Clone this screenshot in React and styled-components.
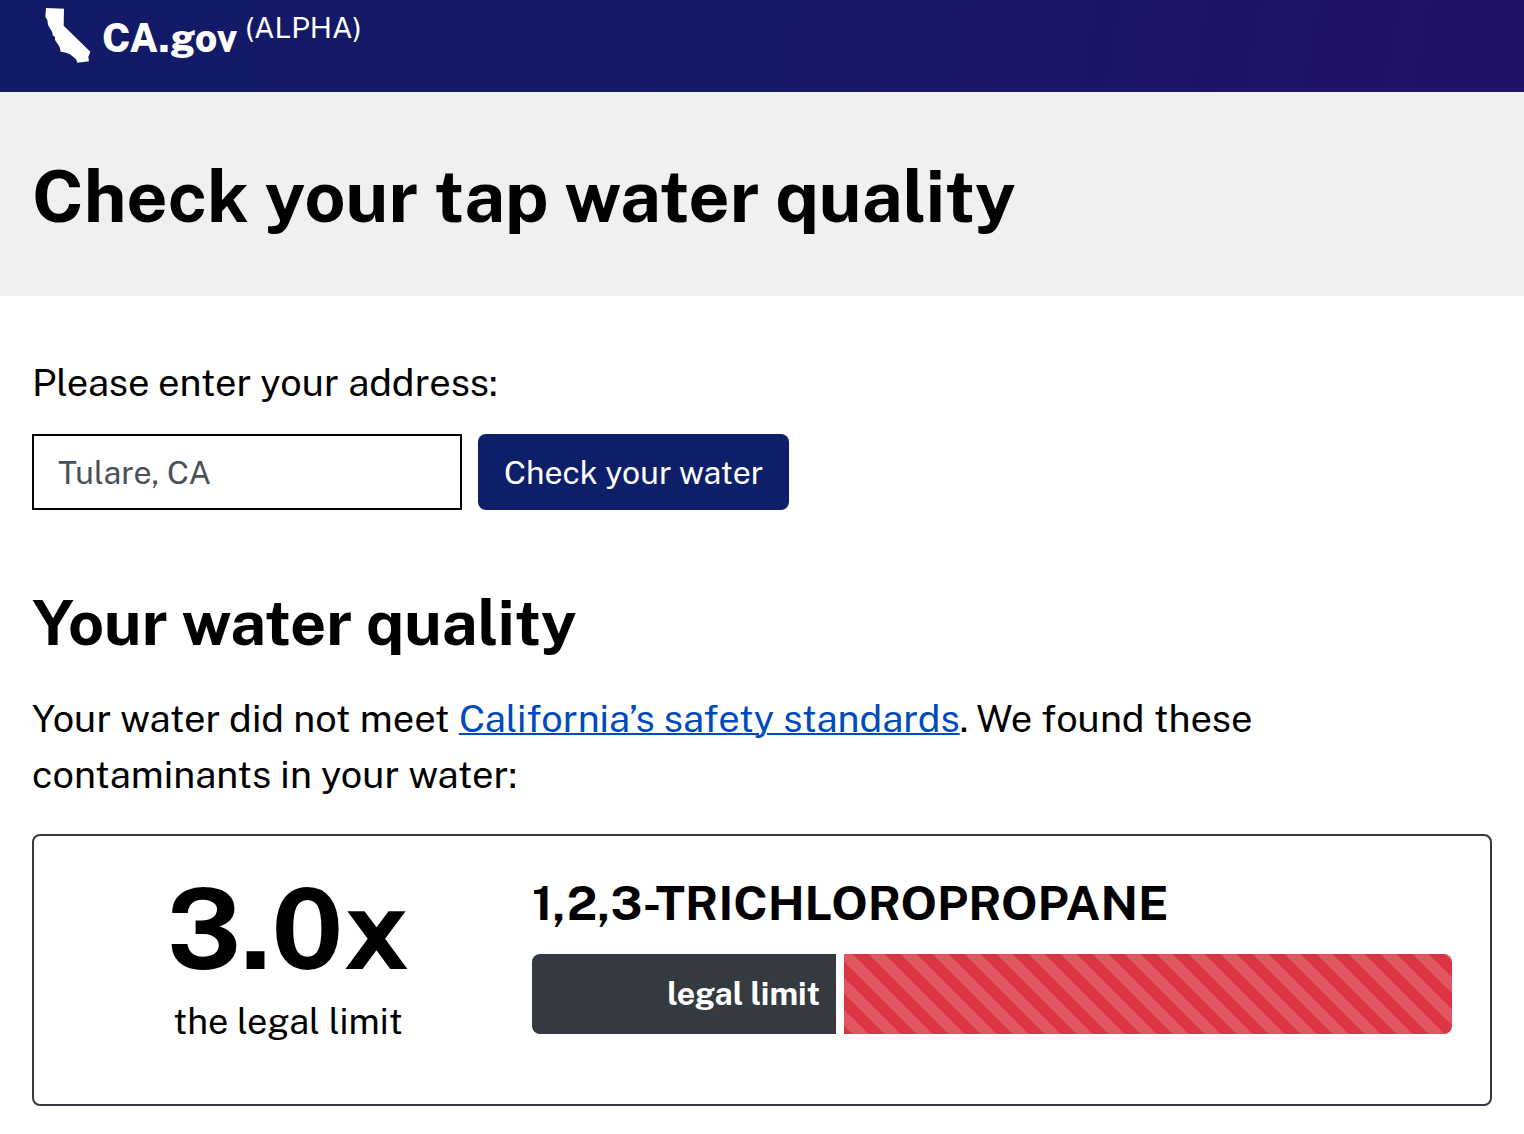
import React from "react";
import styled, { createGlobalStyle } from "styled-components";

const GlobalStyle = createGlobalStyle`
  * {
    box-sizing: border-box;
  }
  body {
    margin: 0;
    background-color: #fff;
    color: #000;
    font-family: "Public Sans", "Liberation Sans", Arial, sans-serif;
    font-size: 38px;
    line-height: 56px;
  }
`;

const Header = styled.header`
  display: flex;
  align-items: flex-start;
  min-height: 92px;
  padding: 0 45px;
  color: #fff;
  background: linear-gradient(100deg, #121b67 0%, #151767 50%, #201068 100%);
`;
const StateIcon = styled.svg`
  width: 46px;
  height: 56px;
  margin: 7px 11px 0 0;
  fill: #fff;
`;
const SiteName = styled.span`
  padding-top: 10px;
  font-size: 39px;
  font-weight: 800;
`;
const Stage = styled.span`
  margin-left: 8px;
  font-size: 29px;
`;
const Banner = styled.div`
  padding: 60px 32px 56px;
  background-color: #f0f0f0;
`;
const PageTitle = styled.h1`
  margin: 0;
  font-size: 72px;
  line-height: 88px;
`;
const Main = styled.main`
  padding: 59px 32px 28px;
`;
const AddressLabel = styled.label`
  display: block;
  margin-bottom: 23px;
`;
const AddressRow = styled.div`
  display: flex;
  flex-wrap: wrap;
  gap: 16px;
`;
const AddressInput = styled.input`
  width: 430px;
  height: 76px;
  padding: 0 24px;
  border: 2px solid #000;
  border-radius: 0;
  font-family: inherit;
  font-size: 32px;
  &::placeholder {
    color: #495057;
    opacity: 1;
  }
`;
const SubmitButton = styled.button`
  height: 76px;
  padding: 0 26px;
  border: 0;
  border-radius: 8px;
  color: #fff;
  background-color: #0e1f69;
  font-family: inherit;
  font-size: 32px;
  cursor: pointer;
`;
const SectionTitle = styled.h2`
  margin: 74px 0 31px;
  font-size: 63px;
  line-height: 76px;
`;
const Summary = styled.p`
  max-width: 1300px;
  margin: 0 0 31px;
`;
const TextLink = styled.a`
  color: #004abc;
  text-decoration: underline;
  text-decoration-thickness: 2px;
`;
const Card = styled.article`
  display: grid;
  grid-template-columns: 1fr 2fr;
  padding: 33px 38px 55px;
  border: 2px solid #343a40;
  border-radius: 8px;
`;
const Amount = styled.div`
  padding-right: 28px;
  font-size: 36px;
  text-align: center;
`;
const Multiple = styled.div`
  margin-bottom: 4px;
  font-size: 112px;
  font-weight: 700;
  line-height: 120px;
`;
const ContaminantName = styled.h3`
  margin: 0 0 17px;
  font-size: 48px;
  line-height: 68px;
`;
const Bar = styled.div`
  display: grid;
  grid-template-columns: 1fr ${({ $excess }) => $excess}fr;
  gap: 8px;
  height: 80px;
  border-radius: 8px;
  overflow: hidden;
`;
const LimitSegment = styled.div`
  display: flex;
  align-items: center;
  justify-content: flex-end;
  padding-right: 16px;
  color: #fff;
  background-color: #343a40;
  font-size: 32px;
  font-weight: 700;
`;
const ExcessSegment = styled.div`
  background-color: #dc3442;
  background-image: linear-gradient(
    45deg,
    rgba(255, 255, 255, 0.17) 25%,
    transparent 25%,
    transparent 50%,
    rgba(255, 255, 255, 0.17) 50%,
    rgba(255, 255, 255, 0.17) 75%,
    transparent 75%
  );
  background-position: -8px 0;
  background-size: 32px 32px;
`;

const contaminants = [{ name: "1,2,3-TRICHLOROPROPANE", ratio: 3 }];

const California = () => (
  <StateIcon viewBox="75 21 138 168" aria-hidden="true">
    <path d="M78 24L132 26L131 77L211 155L205 170L207 184L172 188L168 178L150 163L139 158L122 155L119 141L105 120L105 111L98 106L97 97L84 75L82 60L76 50Z" />
  </StateIcon>
);

const Contaminant = ({ name, ratio }) => (
  <Card>
    <Amount>
      <Multiple>{ratio.toFixed(1)}x</Multiple>
      the legal limit
    </Amount>
    <div>
      <ContaminantName>{name}</ContaminantName>
      <Bar $excess={ratio - 1}>
        <LimitSegment>legal limit</LimitSegment>
        <ExcessSegment />
      </Bar>
    </div>
  </Card>
);

const App = () => (
  <>
    <GlobalStyle />
    <Header>
      <California />
      <SiteName>CA.gov</SiteName>
      <Stage>(ALPHA)</Stage>
    </Header>
    <Banner>
      <PageTitle>Check your tap water quality</PageTitle>
    </Banner>
    <Main>
      <form onSubmit={(e) => e.preventDefault()}>
        <AddressLabel htmlFor="address">Please enter your address:</AddressLabel>
        <AddressRow>
          <AddressInput id="address" type="text" placeholder="Tulare, CA" />
          <SubmitButton type="submit">Check your water</SubmitButton>
        </AddressRow>
      </form>
      <SectionTitle>Your water quality</SectionTitle>
      <Summary>
        Your water did not meet{" "}
        <TextLink href="#standards">California’s safety standards</TextLink>. We
        found these contaminants in your water:
      </Summary>
      {contaminants.map((item) => (
        <Contaminant key={item.name} {...item} />
      ))}
    </Main>
  </>
);

export default App;
